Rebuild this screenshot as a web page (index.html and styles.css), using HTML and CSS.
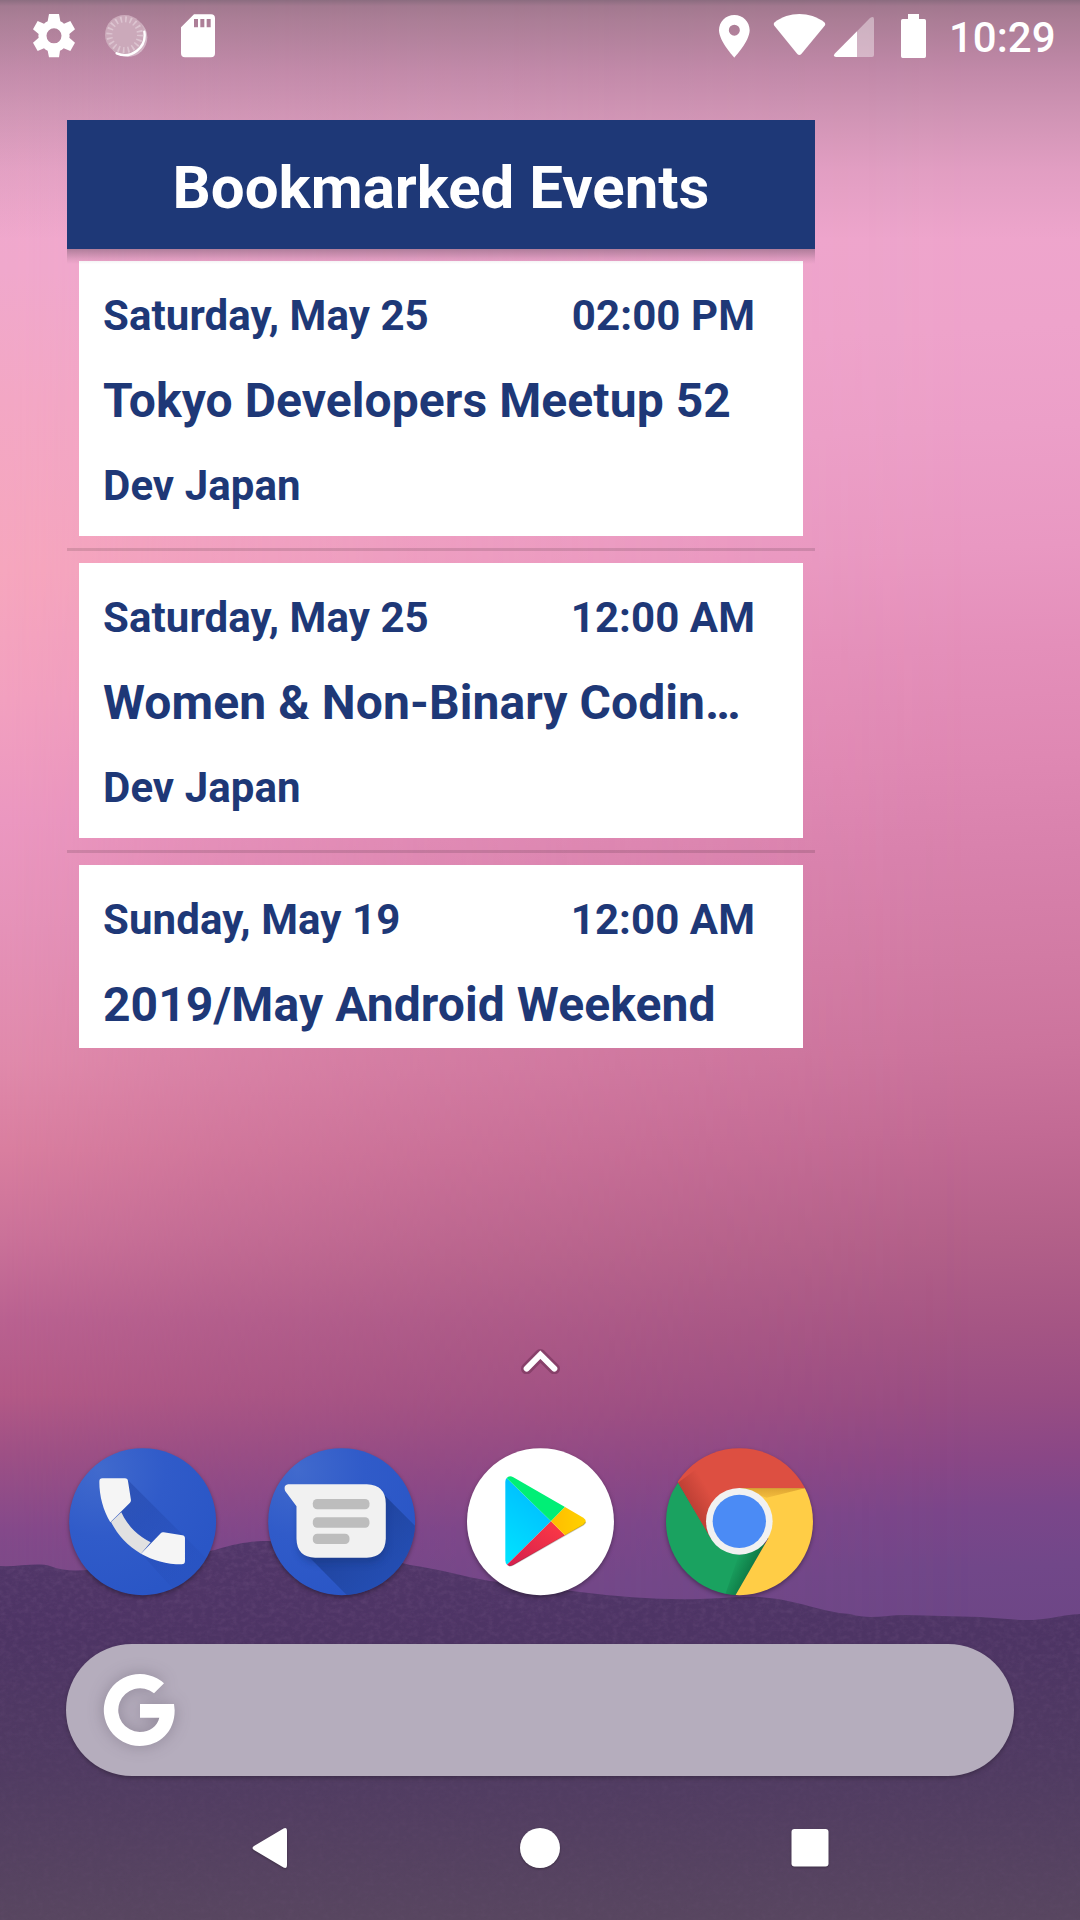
FILE: index.html
```html
<!DOCTYPE html>
<html lang="en">
<head>
<meta charset="utf-8">
<title>Home screen</title>
<link rel="stylesheet" href="styles.css">
</head>
<body>
<div class="screen">
  <div class="wallpaper">
    <div class="sky sky-left"></div>
    <div class="sky-glow"></div>
    <svg class="hills" viewBox="0 1530 1080 390">
      <defs>
        <linearGradient id="hill" x1="0" y1="0" x2="0" y2="1">
          <stop offset="0" stop-color="#513669"/><stop offset=".25" stop-color="#4d3464"/><stop offset=".6" stop-color="#503b62"/><stop offset="1" stop-color="#584660"/>
        </linearGradient>
        <filter id="grain" x="0" y="0" width="100%" height="100%">
          <feTurbulence type="fractalNoise" baseFrequency=".16 .22" numOctaves="3" seed="4"/>
          <feColorMatrix values="0 0 0 0 .48  0 0 0 0 .27  0 0 0 0 .5  .9 0 0 0 -.34"/>
          <feComposite in2="SourceGraphic" operator="in"/>
        </filter>
        <linearGradient id="fade" x1="0" y1="0" x2="0" y2="1"><stop offset="0" stop-color="#fff"/><stop offset=".7" stop-color="#444"/></linearGradient>
        <mask id="grainMask"><rect y="1530" width="1080" height="390" fill="url(#fade)"/></mask>
        <path id="ridge" d="M0 1566C18 1567 38 1562 50 1566C70 1574 90 1569 110 1568C150 1564 180 1557 215 1550C240 1542 255 1541 270 1541C320 1542 375 1556 410 1565C440 1569 465 1577 490 1581C520 1585 550 1588 580 1592C620 1597 660 1600 700 1599C720 1599 740 1596 760 1597C800 1600 820 1612 850 1614C870 1620 885 1615 905 1615L980 1617L1020 1620C1045 1621 1060 1615 1080 1614V1920H0Z"/>
      </defs>
      <use href="#ridge" fill="url(#hill)"/>
      <g mask="url(#grainMask)"><use href="#ridge" filter="url(#grain)" opacity=".3"/></g>
    </svg>
  </div>

  <header class="status">
    <svg class="s-gear" viewBox="96 39 132 138"><path fill="#fff" fill-rule="evenodd" d="M147 42H177L181 64Q187 67 192 71L211 63L225 88L208 102Q210 107 208 113L225 128L211 153L191 145Q186 150 180 152L177 172H147L143 152Q137 150 132 145L113 153L99 128L116 113Q114 107 116 102L99 88L113 63L132 71Q137 67 143 64ZM162 85A22.500 22.500 0 1 0 162 130A22.500 22.500 0 1 0 162 85Z"/></svg>
    <svg class="s-spin" viewBox="312 39 132 138"><circle cx="383" cy="112" r="59" fill="#fff" opacity=".4"/><circle cx="374" cy="104" r="59" fill="#cba9ba"/><path d="M433 95A60 60 0 0 1 350 160" fill="none" stroke="#fff" stroke-width="7" stroke-linecap="round"/><circle cx="374" cy="104" r="46" fill="none" stroke="#dcc4d0" stroke-width="18" stroke-dasharray="5 9.450"/></svg>
    <svg class="s-sd" viewBox="540 39 108 138"><path fill="#fff" fill-rule="evenodd" d="M582 43H633Q645 43 645 55V160Q645 172 633 172H555Q543 172 543 160V82ZM582 57V82H594V57ZM601 57V82H613V57ZM620 57V82H632V57Z"/></svg>
    <div class="status-right">
      <svg class="s-pin" viewBox="54 39 99 138"><path fill="#fff" fill-rule="evenodd" d="M103 45C77 45 57 65 57 91C57 124 103 173 103 173C103 173 149 124 149 91C149 65 129 45 103 45ZM103 74A16.500 16.500 0 1 1 103 107A16.500 16.500 0 1 1 103 74Z"/></svg>
      <svg class="s-wifi" viewBox="219 39 159 138"><path fill="#fff" d="M224 67C266 34 330 34 373 67Q378 72 374 77L304 162Q298 168 292 162L223 77Q219 71 224 67Z"/></svg>
      <svg class="s-cell" viewBox="399 39 126 138"><path fill="#fff" opacity=".4" d="M471 94L510 54Q522 46 522 58V165Q522 171 516 171H471Z"/><path fill="#fff" d="M471 94V171H408Q398 169 404 161Z"/></svg>
      <svg class="s-bat" viewBox="600 39 81 138"><path fill="#fff" d="M624 42H657V57H673Q678 57 678 62V169Q678 174 673 174H608Q603 174 603 169V62Q603 57 608 57H624Z"/></svg>
      <span class="clock">10:29</span>
    </div>
  </header>

  <section class="widget">
    <h1 class="widget-title">Bookmarked Events</h1>
    <div class="events">
      <article class="event">
        <div class="when"><span>Saturday, May 25</span><span>02:00 PM</span></div>
        <div class="name">Tokyo Developers Meetup 52</div>
        <div class="group">Dev Japan</div>
      </article>
      <div class="divider"></div>
      <article class="event">
        <div class="when"><span>Saturday, May 25</span><span>12:00 AM</span></div>
        <div class="name">Women &amp; Non-Binary Codin…</div>
        <div class="group">Dev Japan</div>
      </article>
      <div class="divider"></div>
      <article class="event event-cut">
        <div class="when"><span>Sunday, May 19</span><span>12:00 AM</span></div>
        <div class="name">2019/May Android Weekend</div>
      </article>
    </div>
  </section>

  <svg class="chevron" viewBox="213 55 117 78"><path d="M230 117L271 75L313 117" fill="none" stroke="#7d3a61" stroke-opacity=".75" stroke-width="34" stroke-linecap="round" stroke-linejoin="round"/><path d="M230 117L271 75L313 117" fill="none" stroke="#fff" stroke-width="18" stroke-linecap="round"/></svg>

  <nav class="dock">
    <svg class="app" viewBox="57 83 442 442">
      <defs>
        <radialGradient id="blue" cx=".2" cy=".15" r=".9"><stop offset="0" stop-color="#416acd"/><stop offset=".5" stop-color="#305bc9"/><stop offset="1" stop-color="#2a56c6"/></radialGradient>
        <linearGradient id="phSh" gradientUnits="userSpaceOnUse" x1="200" y1="220" x2="410" y2="440"><stop offset="0" stop-color="#1c3b99" stop-opacity=".4"/><stop offset="1" stop-color="#1c3b99" stop-opacity=".08"/></linearGradient>
        <clipPath id="c1"><circle cx="278" cy="304" r="220.500"/></clipPath>
      </defs>
      <circle cx="278" cy="304" r="220.500" fill="url(#blue)"/>
      <path clip-path="url(#c1)" fill="url(#phSh)" d="M233 178L520 465L400 540L275 402L183 305L212 278Z"/>
      <path fill="#e1e1e1" d="M183 305L214 276C232 315 262 346 302 366L273 400C232 376 205 347 183 305Z"/>
      <path fill="#f5f5f5" d="M157 174H225Q233 174 234 182L243 240Q243 244 240 247L181 306C160 270 148 228 148 184Q148 174 157 174Z"/>
      <path fill="#f5f5f5" d="M333 338Q336 335 341 336L397 345Q405 346 405 354V422Q405 432 395 432C350 432 308 420 273 400Z"/>
    </svg>
    <svg class="app" viewBox="653.500 83 442 442">
      <defs>
        <linearGradient id="msSh" gradientUnits="userSpaceOnUse" x1="900" y1="330" x2="1040" y2="480"><stop offset="0" stop-color="#1d3f94" stop-opacity=".8"/><stop offset="1" stop-color="#1f48a6" stop-opacity=".55"/></linearGradient>
        <clipPath id="c2"><circle cx="874.500" cy="304" r="220.500"/></clipPath>
        <filter id="soft" x="-20%" y="-20%" width="140%" height="150%"><feGaussianBlur stdDeviation="11"/></filter>
      </defs>
      <circle cx="874.500" cy="304" r="220.500" fill="url(#blue)"/>
      <g clip-path="url(#c2)">
        <path fill="url(#msSh)" d="M1000 222L1130 352V560H925L765 398Z"/>
        <rect x="745" y="215" width="262" height="212" rx="50" fill="#17357f" opacity=".5" filter="url(#soft)"/>
      </g>
      <path fill="#f1f1f1" d="M714 192H950Q1007 194 1007 250V355Q1005 410 950 412H795Q740 410 739 355V258L705 212Q699 194 714 192Z"/>
      <g fill="#bdbdbd"><rect x="788" y="236" width="170" height="31" rx="13"/><rect x="788" y="291" width="170" height="31" rx="13"/><rect x="788" y="340" width="110" height="31" rx="13"/></g>
    </svg>
    <svg class="app" viewBox="51 353 442 442">
      <defs>
        <linearGradient id="pb" x1=".6" y1="0" x2=".2" y2="1"><stop offset="0" stop-color="#00baff"/><stop offset="1" stop-color="#00e2ff"/></linearGradient>
        <linearGradient id="pr" x1="1" y1="0" x2="0" y2="1"><stop offset="0" stop-color="#ff3a44"/><stop offset="1" stop-color="#d31f4f"/></linearGradient>
        <linearGradient id="py" x1="1" y1="0" x2="0" y2="0"><stop offset="0" stop-color="#ffd200"/><stop offset="1" stop-color="#ffbc00"/></linearGradient>
      </defs>
      <circle cx="271.500" cy="574" r="220.500" fill="#fff"/>
      <path fill="url(#pb)" d="M170 443L303 573L171 703Q166 699 166 690V455Q166 447 170 443Z"/>
      <path fill="#00ef76" d="M170 443Q178 434 190 441L345 530L303 573Z"/>
      <path fill="url(#pr)" d="M303 573L345 615L190 704Q178 711 171 703Z"/>
      <path fill="url(#py)" d="M345 530L400 562Q415 573 400 584L345 615L303 573Z"/>
      <path d="M177 707Q183 708 190 704L400 584Q406 579 407 575" fill="none" stroke="#000" stroke-opacity=".2" stroke-width="4"/>
    </svg>
    <svg class="app" viewBox="648 353 442 442">
      <defs>
        <clipPath id="c4"><circle cx="868.500" cy="574" r="220.500"/></clipPath>
        <linearGradient id="rs" gradientUnits="userSpaceOnUse" x1="727" y1="530" x2="785" y2="495"><stop offset="0" stop-color="#a5332b" stop-opacity=".55"/><stop offset="1" stop-color="#a5332b" stop-opacity="0"/></linearGradient>
        <linearGradient id="gs" gradientUnits="userSpaceOnUse" x1="905" y1="715" x2="855" y2="690"><stop offset="0" stop-color="#0a6b3c" stop-opacity=".7"/><stop offset="1" stop-color="#0a6b3c" stop-opacity="0"/></linearGradient>
        <linearGradient id="ys" gradientUnits="userSpaceOnUse" x1="900" y1="473" x2="900" y2="515"><stop offset="0" stop-color="#c98d25" stop-opacity=".65"/><stop offset="1" stop-color="#e0a030" stop-opacity=".2"/></linearGradient>
      </defs>
      <g clip-path="url(#c4)">
        <path fill="#dd4f41" d="M640 340H1100V474H868L780 624L684 457Z"/>
        <path fill="url(#rs)" d="M684 457L760 400L850 480L780 624Z"/>
        <path fill="#1aa260" d="M684 457L782 624L868 674L945 640L857 795L700 820L620 560Z"/>
        <path fill="url(#gs)" d="M945 640L857 795L825 795L868 668Z"/>
        <path fill="#ffcd46" d="M868 474H1100V820H842L955 624Z"/>
        <path fill="url(#ys)" d="M868 474H1065L950 502Z"/>
      </g>
      <circle cx="868" cy="573" r="100" fill="#f1f1f1"/><circle cx="868" cy="573" r="80" fill="#4b8bf5"/>
    </svg>
  </nav>

  <div class="search">
    <svg class="g" viewBox="159 159 219 222"><path fill="#fff" d="M342 190A108 108 0 1 0 269 378C330 378 374 335 374 271L372 252H270V293H328C322 318 300 336 269 336A65.500 65.500 0 1 1 312 220Z"/></svg>
  </div>

  <nav class="navbar">
    <svg viewBox="0 0 40 42"><path fill="#fff" d="M33.500 1.500Q37 0 37 4V38Q37 42 33.500 40.500L4 23Q1 21 4 19Z"/></svg>
    <svg viewBox="0 0 40 42"><circle cx="20" cy="21" r="20" fill="#fff"/></svg>
    <svg viewBox="0 0 40 42"><rect x="1.500" y="2" width="37" height="37.500" rx="3" fill="#fff"/></svg>
  </nav>
</div>
</body>
</html>
```
FILE: styles.css
```css
body {
  margin: 0;
  font-family: Roboto, "Liberation Sans", sans-serif;
}

svg {
  display: block;
  flex: none;
}

.screen {
  position: relative;
  width: 1080px;
  height: 1920px;
  overflow: hidden;
  display: flex;
  flex-direction: column;
}

.screen > * {
  position: relative;
}

.screen > .wallpaper {
  position: absolute;
  inset: 0;
  background: linear-gradient(177.500deg, #eea5cc 0, #eea5cc 270px, #eea3cb 370px, #ec9fc8 470px, #e998c2 590px, #e48fba 690px, #df88b3 800px, #d881ac 900px, #d27ba4 1000px, #cc749d 1090px, #c26a94 1180px, #b36089 1280px, #a55584 1370px, #994d83 1440px, #8a4786 1500px, #7b468a 1550px, #714789 1610px, #6c4685 1680px);
}

.sky,
.sky-glow,
.hills {
  position: absolute;
  inset: 0;
}

.sky-left {
  background: linear-gradient(#efa9cf 0, #f0a8cc 270px, #f3a7c4 400px, #f6a6bd 570px, #f2a0bf 700px, #eb97c0 820px, #e592b8 930px, #e08aab 1060px, #d97e9f 1150px, #cb7299 1235px, #b96190 1320px, #b35986 1395px, #9d5085 1455px, #84498a 1530px, #7d4a88 1570px);
  -webkit-mask-image: linear-gradient(90deg, #000 0, rgba(0, 0, 0, .6) 20%, rgba(0, 0, 0, .35) 40%, rgba(0, 0, 0, .15) 65%, transparent 90%);
  mask-image: linear-gradient(90deg, #000 0, rgba(0, 0, 0, .6) 20%, rgba(0, 0, 0, .35) 40%, rgba(0, 0, 0, .15) 65%, transparent 90%);
}

/* darkened strip behind the status icons */
.sky-glow {
  background: linear-gradient(rgba(40, 50, 50, .5) 0, rgba(70, 65, 68, .45) 6px, rgba(70, 65, 68, .4) 20px, rgba(80, 65, 78, .28) 72px, rgba(80, 75, 80, .2) 110px, rgba(80, 75, 80, .08) 170px, transparent 240px);
}

.hills {
  top: 1530px;
  width: 1080px;
  height: 390px;
}

.status {
  height: 72px;
  padding: 0 26px 0 32px;
  box-sizing: border-box;
  display: flex;
}

.status svg {
  height: 46px;
  margin-top: 13px;
}

.s-gear { width: 44px; }
.s-spin { width: 44px; margin-left: 28px; }
.s-sd { width: 36px; margin-left: 32px; }
.s-pin { width: 33px; }
.s-wifi { width: 53px; margin-left: 22px; }
.s-cell { width: 42px; margin-left: 7px; }
.s-bat { width: 27px; margin-left: 25px; }

.status-right {
  display: flex;
  margin-left: 502px;
}

.clock {
  margin-left: 22px;
  font-size: 42px;
  font-weight: 500;
  line-height: 76px;
  color: #fff;
}

.widget {
  width: 748px;
  margin: 48px 0 0 67px;
}

.widget-title {
  position: relative;
  margin: 0;
  height: 129px;
  font-size: 60px;
  font-weight: 700;
  line-height: 136px;
  text-align: center;
  color: #fff;
  background: #1e3877;
}

.widget-title::after {
  content: "";
  position: absolute;
  left: 0;
  right: 0;
  top: 129px;
  height: 15px;
  background: linear-gradient(rgba(30, 30, 40, .3), rgba(30, 30, 40, .08) 10px, transparent);
}

.events {
  padding: 12px 0 0;
}

.event {
  height: 275px;
  margin: 0 12px;
  padding: 12px 48px 0 24px;
  box-sizing: border-box;
  overflow: hidden;
  background: #fff;
  color: #1e3877;
  font-size: 42px;
  font-weight: 700;
  line-height: 85px;
  letter-spacing: .08px;
  white-space: nowrap;
}

.event-cut {
  height: 183px;
}

.when {
  display: flex;
  justify-content: space-between;
}

.name {
  font-size: 48px;
}

.divider {
  height: 3px;
  margin: 12px 0;
  background: rgba(0, 0, 0, .12);
}

.chevron {
  width: 39px;
  height: 26px;
  margin: 300px 0 0 521px;
}

.dock {
  display: flex;
  gap: 51.700px;
  margin: 74px 0 0 69px;
}

.app {
  width: 147.300px;
  height: 147.300px;
  overflow: visible;
  filter: drop-shadow(0 2px 2px rgba(0, 0, 0, .35));
}

.search {
  width: 948px;
  height: 132px;
  margin: 48.700px 0 0 66px;
  padding: 29px 37px;
  box-sizing: border-box;
  border-radius: 66px;
  background: #b5adbd;
  box-shadow: 0 2px 4px rgba(0, 0, 0, .25);
}

.g {
  width: 73px;
  height: 74px;
  filter: drop-shadow(0 0 8px rgba(60, 50, 70, .3));
}

.navbar {
  height: 144px;
  padding: 51px 250px 0;
  box-sizing: border-box;
  display: flex;
  justify-content: space-between;
}

.navbar svg {
  width: 40px;
  height: 42px;
  filter: drop-shadow(0 1px 1px rgba(0, 0, 0, .3));
}
```
